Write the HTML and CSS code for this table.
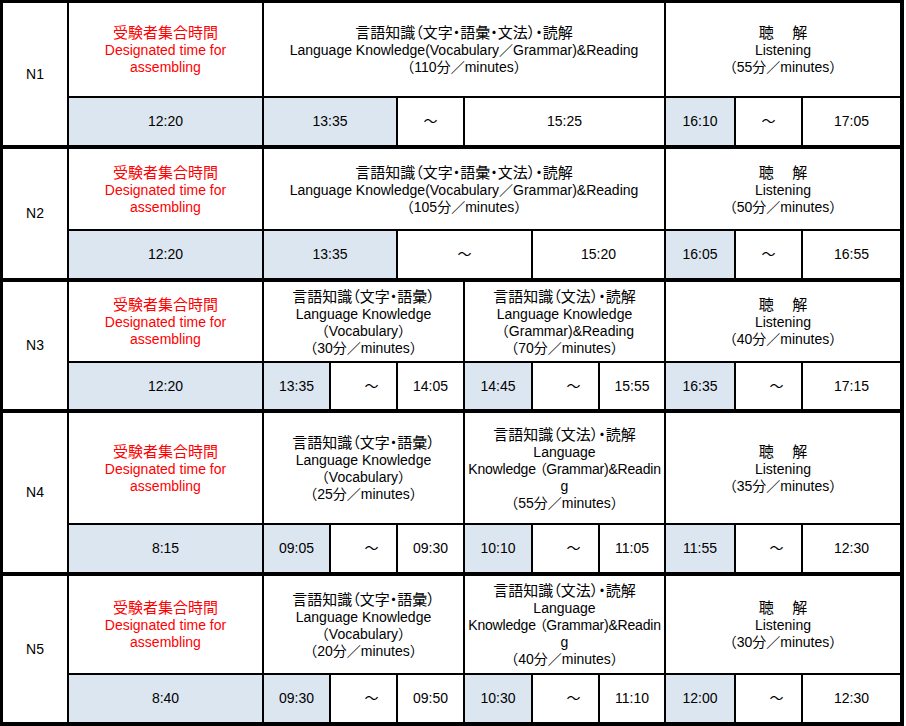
FILE: index.html
```html
<!DOCTYPE html>
<html lang="ja">
<head>
<meta charset="utf-8">
<title>JLPT 試験時間</title>
<link rel="stylesheet" href="styles.css">
</head>
<body>
<div class="sheet">

  <!-- N1 -->
  <div class="level n1">
    <div class="cell lvl">N1</div>
    <div class="cell red"><div class="t"><span class="jp">受験者集合時間</span><br>Designated time for<br>assembling</div></div>
    <div class="cell s6"><div class="t"><span class="jp">言語知識（文字・語彙・文法）・読解</span><br>Language Knowledge(Vocabulary／Grammar)&amp;Reading<br>（110分／minutes）</div></div>
    <div class="cell s3"><div class="t"><span class="jp">聴　 解</span><br>Listening<br>（55分／minutes）</div></div>
    <div class="cell blue">12:20</div>
    <div class="cell blue s2">13:35</div>
    <div class="cell">～</div>
    <div class="cell s3">15:25</div>
    <div class="cell blue">16:10</div>
    <div class="cell">～</div>
    <div class="cell">17:05</div>
  </div>

  <!-- N2 -->
  <div class="level n2">
    <div class="cell lvl">N2</div>
    <div class="cell red"><div class="t"><span class="jp">受験者集合時間</span><br>Designated time for<br>assembling</div></div>
    <div class="cell s6"><div class="t"><span class="jp">言語知識（文字・語彙・文法）・読解</span><br>Language Knowledge(Vocabulary／Grammar)&amp;Reading<br>（105分／minutes）</div></div>
    <div class="cell s3"><div class="t"><span class="jp">聴　 解</span><br>Listening<br>（50分／minutes）</div></div>
    <div class="cell blue">12:20</div>
    <div class="cell blue s2">13:35</div>
    <div class="cell s2">～</div>
    <div class="cell s2">15:20</div>
    <div class="cell blue">16:05</div>
    <div class="cell">～</div>
    <div class="cell">16:55</div>
  </div>

  <!-- N3 -->
  <div class="level n3">
    <div class="cell lvl">N3</div>
    <div class="cell red"><div class="t"><span class="jp">受験者集合時間</span><br>Designated time for<br>assembling</div></div>
    <div class="cell s3"><div class="t"><span class="jp">言語知識（文字・語彙）</span><br>Language Knowledge<br>（Vocabulary）<br>（30分／minutes）</div></div>
    <div class="cell s3"><div class="t"><span class="jp">言語知識（文法）・読解</span><br>Language Knowledge<br>（Grammar)&amp;Reading<br>（70分／minutes）</div></div>
    <div class="cell s3"><div class="t"><span class="jp">聴　 解</span><br>Listening<br>（40分／minutes）</div></div>
    <div class="cell blue">12:20</div>
    <div class="cell blue">13:35</div>
    <div class="cell tilde">～</div>
    <div class="cell">14:05</div>
    <div class="cell blue">14:45</div>
    <div class="cell tilde">～</div>
    <div class="cell">15:55</div>
    <div class="cell blue">16:35</div>
    <div class="cell tilde">～</div>
    <div class="cell">17:15</div>
  </div>

  <!-- N4 -->
  <div class="level n4">
    <div class="cell lvl">N4</div>
    <div class="cell red"><div class="t"><span class="jp">受験者集合時間</span><br>Designated time for<br>assembling</div></div>
    <div class="cell s3"><div class="t"><span class="jp">言語知識（文字・語彙）</span><br>Language Knowledge<br>（Vocabulary）<br>（25分／minutes）</div></div>
    <div class="cell s3"><div class="t"><span class="jp">言語知識（文法）・読解</span><br>Language<br><span class="tight">Knowledge <span class="pp">（</span>Grammar)&amp;Readin</span><br>g<br>（55分／minutes）</div></div>
    <div class="cell s3"><div class="t"><span class="jp">聴　 解</span><br>Listening<br>（35分／minutes）</div></div>
    <div class="cell blue">8:15</div>
    <div class="cell blue">09:05</div>
    <div class="cell tilde">～</div>
    <div class="cell">09:30</div>
    <div class="cell blue">10:10</div>
    <div class="cell tilde">～</div>
    <div class="cell">11:05</div>
    <div class="cell blue">11:55</div>
    <div class="cell tilde">～</div>
    <div class="cell">12:30</div>
  </div>

  <!-- N5 -->
  <div class="level n5">
    <div class="cell lvl">N5</div>
    <div class="cell red"><div class="t"><span class="jp">受験者集合時間</span><br>Designated time for<br>assembling</div></div>
    <div class="cell s3"><div class="t"><span class="jp">言語知識（文字・語彙）</span><br>Language Knowledge<br>（Vocabulary）<br>（20分／minutes）</div></div>
    <div class="cell s3"><div class="t"><span class="jp">言語知識（文法）・読解</span><br>Language<br><span class="tight">Knowledge <span class="pp">（</span>Grammar)&amp;Readin</span><br>g<br>（40分／minutes）</div></div>
    <div class="cell s3"><div class="t"><span class="jp">聴　 解</span><br>Listening<br>（30分／minutes）</div></div>
    <div class="cell blue">8:40</div>
    <div class="cell blue">09:30</div>
    <div class="cell tilde">～</div>
    <div class="cell">09:50</div>
    <div class="cell blue">10:30</div>
    <div class="cell tilde">～</div>
    <div class="cell">11:10</div>
    <div class="cell blue">12:00</div>
    <div class="cell tilde">～</div>
    <div class="cell">12:30</div>
  </div>

</div>
</body>
</html>
```

FILE: styles.css
```css
html, body {
  margin: 0;
  padding: 0;
  background: #ffffff;
}

body {
  font-family: "Liberation Sans", "Noto Sans CJK JP", sans-serif;
  font-size: 14px;
  line-height: 17px;
  color: #000000;
}

.sheet {
  width: 897px;
  background: #000000;
  padding: 3px 4px 4px 3px;
  display: flex;
  flex-direction: column;
  gap: 4px;
}

.level {
  display: grid;
  grid-template-columns: 64px 193px 65px 65px 65px 66px 65px 64px 68px 65px 97px;
  gap: 2px;
  background: #000000;
}

.n1 { grid-template-rows: 93px 47px; }
.n2 { grid-template-rows: 80px 47px; }
.n3 { grid-template-rows: 79px 46px; }
.n4 { grid-template-rows: 110px 47px; }
.n5 { grid-template-rows: 97px 47px; }

.cell {
  background: #ffffff;
  display: flex;
  align-items: center;
  justify-content: center;
  text-align: center;
  white-space: nowrap;
  overflow: hidden;
}

.t {
  text-align: center;
}

.lvl {
  grid-row: span 2;
}

.red {
  color: #ff0000;
}

.blue {
  background: #dce6f1;
}

.s2 { grid-column: span 2; }
.s3 { grid-column: span 3; }
.s6 { grid-column: span 6; }

.tilde {
  padding-left: 16px;
  box-sizing: border-box;
}

.tight {
  letter-spacing: -0.2px;
}

.pp {
  font-feature-settings: "palt";
}

.jp {
  font-family: "Noto Sans CJK JP", sans-serif;
  font-size: 15px;
  line-height: 17px;
  font-feature-settings: "palt";
}
```
